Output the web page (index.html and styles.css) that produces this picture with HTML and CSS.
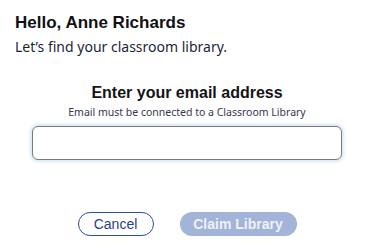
FILE: index.html
```html
<!DOCTYPE html>
<html>
<head>
<meta charset="utf-8">
<link rel="stylesheet" href="styles.css">
</head>
<body>
<div class="modal">
  <div class="header">
    <h1 class="title">Hello, Anne Richards</h1>
    <p class="lead">Let’s find your classroom library.</p>
  </div>
  <div class="form">
    <h2 class="label">Enter your email address</h2>
    <p class="hint">Email must be connected to a Classroom Library</p>
    <input class="email" type="text">
  </div>
  <div class="actions">
    <button class="btn btn-outline">Cancel</button>
    <button class="btn btn-primary" disabled>Claim Library</button>
  </div>
</div>
</body>
</html>
```

FILE: styles.css
```css
html, body {
  margin: 0;
  padding: 0;
  background: #ffffff;
}
.modal {
  width: 374px;
  height: 249px;
  box-sizing: border-box;
  padding: 12px 15px 0 15px;
  display: flex;
  flex-direction: column;
  font-family: "Liberation Sans", Arial, sans-serif;
  color: #1b1b1f;
}
.title {
  margin: 0;
  font-family: "Liberation Sans", Arial, sans-serif;
  font-size: 17px;
  line-height: 21px;
  font-weight: 700;
  color: #111114;
}
.lead {
  margin: 5px 0 0 0;
  font-family: "Noto Sans", sans-serif;
  font-size: 14px;
  line-height: 18px;
  color: #1d1f3a;
}
.form {
  display: flex;
  flex-direction: column;
  align-items: center;
  margin-top: 28px;
}
.label {
  margin: 0;
  font-size: 16px;
  line-height: 18px;
  font-weight: 700;
  color: #141418;
}
.hint {
  margin: 3px 0 0 0;
  font-family: "Noto Sans", sans-serif;
  font-size: 10.5px;
  line-height: 14px;
  color: #3a3550;
}
.email {
  margin-top: 7px;
  width: 310px;
  height: 34px;
  box-sizing: border-box;
  border: 1.5px solid #7a7a7e;
  border-radius: 6px;
  background: #fff;
  box-shadow: 0 0 3px 2px rgba(150, 185, 235, 0.35);
  outline: none;
}
.actions {
  display: flex;
  justify-content: center;
  gap: 26px;
  margin-top: 52px;
}
.btn {
  height: 24px;
  box-sizing: border-box;
  border-radius: 12px;
  font-family: "Liberation Sans", Arial, sans-serif;
  font-size: 14px;
  padding: 0;
}
.btn-outline {
  width: 76px;
  background: #fff;
  border: 1.5px solid #2e4f9e;
  color: #2b3f86;
}
.btn-primary {
  width: 117px;
  background: #a3b4d9;
  border: none;
  color: #eef1f8;
  font-weight: 700;
}
```
